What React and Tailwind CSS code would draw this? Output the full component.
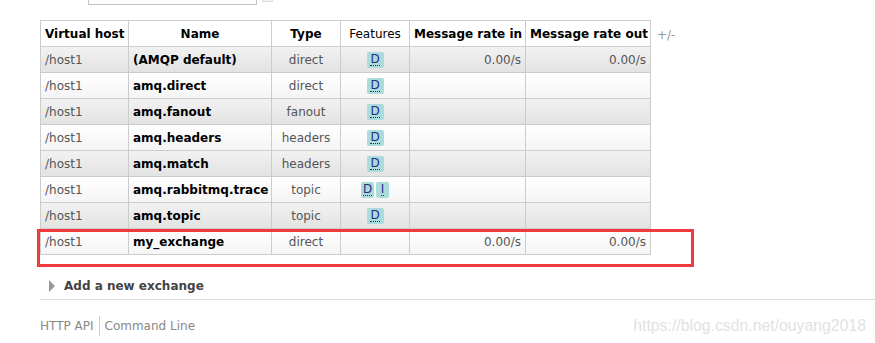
import React from 'react';

const exchanges = [
    { vhost: '/host1', name: '(AMQP default)', type: 'direct', features: ['D'], rateIn: '0.00/s', rateOut: '0.00/s' },
    { vhost: '/host1', name: 'amq.direct', type: 'direct', features: ['D'] },
    { vhost: '/host1', name: 'amq.fanout', type: 'fanout', features: ['D'] },
    { vhost: '/host1', name: 'amq.headers', type: 'headers', features: ['D'] },
    { vhost: '/host1', name: 'amq.match', type: 'headers', features: ['D'] },
    { vhost: '/host1', name: 'amq.rabbitmq.trace', type: 'topic', features: ['D', 'I'] },
    { vhost: '/host1', name: 'amq.topic', type: 'topic', features: ['D'] },
    { vhost: '/host1', name: 'my_exchange', type: 'direct', features: [], rateIn: '0.00/s', rateOut: '0.00/s' },
];

const featureTitles = { D: 'durable: true', I: 'internal: true' };

const cell = 'border border-[#cccccc] px-[4px] h-[26px] whitespace-nowrap overflow-hidden';

const Feature = ({ code, narrow }) => (
    <span className={`inline-flex items-center justify-center ${narrow ? 'w-[13px]' : 'w-[17px]'} h-[16px] rounded-[2px] bg-[#aadcdc] text-[#2a2a8a] leading-none`}>
        <abbr title={featureTitles[code]} className="no-underline border-b border-dotted border-[#333] leading-[11px]">{code}</abbr>
    </span>
);

const ExchangeRow = ({ row, index }) => {
    const shade = index % 2 === 0
        ? 'bg-gradient-to-b from-[#f2f2f2] to-[#e2e2e2]'
        : 'bg-gradient-to-b from-[#ffffff] to-[#f4f4f4]';
    return (
        <tr className={shade}>
            <td className={`${cell} text-[#555]`}>{row.vhost}</td>
            <td className={`${cell} font-bold text-black`}>{row.name}</td>
            <td className={`${cell} text-center text-[#555]`}>{row.type}</td>
            <td className={`${cell} text-center`}>
                <div className="flex justify-center gap-[2px]">
                    {row.features.map((f) => <Feature key={f} code={f} narrow={row.features.length > 1} />)}
                </div>
            </td>
            <td className={`${cell} text-right text-[#555]`}>{row.rateIn}</td>
            <td className={`${cell} text-right text-[#555]`}>{row.rateOut}</td>
        </tr>
    );
};

const App = () => {
    return (
        <div className="relative w-[875px] h-[343px] overflow-hidden bg-white font-['DejaVu_Sans',Verdana,sans-serif] text-[12px]">
            {/* filter box peeking in from above */}
            <div className="absolute left-[88px] top-[-20px] w-[169px] h-[25px] border border-[#c4c4c4] bg-white"></div>
            <div className="absolute left-[262px] top-[-8px] w-[11px] h-[10px] border border-[#ddd] bg-[#f4f4f4]"></div>

            <div className="pl-[40px] pt-[20px]">
                <div className="flex items-start">
                    <table className="border-collapse table-fixed w-[610px]">
                        <colgroup>
                            <col className="w-[88px]" />
                            <col className="w-[143px]" />
                            <col className="w-[69px]" />
                            <col className="w-[69px]" />
                            <col className="w-[116px]" />
                            <col className="w-[125px]" />
                        </colgroup>
                        <thead>
                            <tr className="bg-white">
                                <th className={`${cell} text-left font-bold`}>Virtual host</th>
                                <th className={`${cell} text-center font-bold`}>Name</th>
                                <th className={`${cell} text-center font-bold`}>Type</th>
                                <th className={`${cell} text-center font-normal`}>Features</th>
                                <th className={`${cell} text-center font-bold`}>Message rate in</th>
                                <th className={`${cell} text-center font-bold`}>Message rate out</th>
                            </tr>
                        </thead>
                        <tbody>
                            {exchanges.map((row, i) => <ExchangeRow key={row.name} row={row} index={i} />)}
                        </tbody>
                    </table>
                    <span className="ml-[6px] mt-[6px] text-[#999]">+/-</span>
                </div>

                <div className="flex items-center gap-[9px] pt-[22px] pb-[4px] pl-[9px] border-b border-[#dddddd]">
                    <span className="w-0 h-0 border-y-[6px] border-y-transparent border-l-[6px] border-l-[#999]"></span>
                    <span className="font-bold text-[12px] text-[#444]">Add a new exchange</span>
                </div>

                <div className="flex items-center pt-[16px] text-[#888]">
                    <span className="pr-[5px] border-r border-[#ccc] leading-[20px]">HTTP API</span>
                    <span className="pl-[5px]">Command Line</span>
                </div>
            </div>

            {/* highlight around the newly created exchange */}
            <div className="absolute left-[37px] top-[229px] w-[657px] h-[38px] border-[3px] border-[#f2393c]"></div>

            <div className="absolute right-[9px] top-[314px] font-['Liberation_Sans',Arial,sans-serif] text-[15.8px] text-[#e2e2e2]">https://blog.csdn.net/ouyang2018</div>
        </div>
    );
};

export default App;
